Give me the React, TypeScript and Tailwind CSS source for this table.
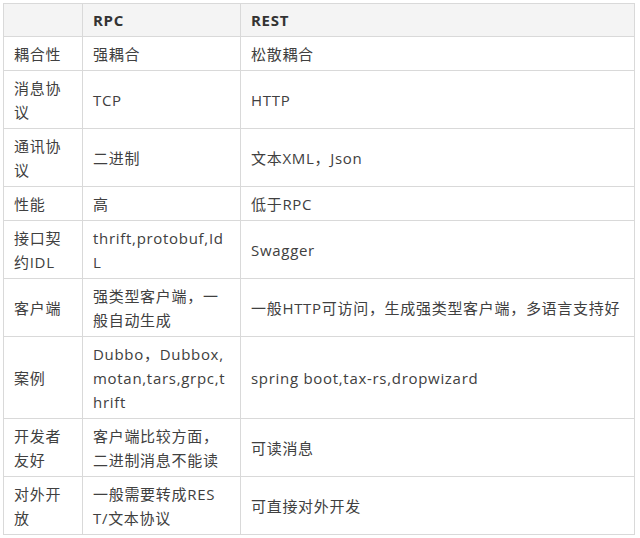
const rows: [string[], string[], string[]][] = [
  [["耦合性"], ["强耦合"], ["松散耦合"]],
  [["消息协", "议"], ["TCP"], ["HTTP"]],
  [["通讯协", "议"], ["二进制"], ["文本XML，Json"]],
  [["性能"], ["高"], ["低于RPC"]],
  [["接口契", "约IDL"], ["thrift,protobuf,Id", "L"], ["Swagger"]],
  [["客户端"], ["强类型客户端，一", "般自动生成"], ["一般HTTP可访问，生成强类型客户端，多语言支持好"]],
  [["案例"], ["Dubbo，Dubbox,", "motan,tars,grpc,t", "hrift"], ["spring boot,tax-rs,dropwizard"]],
  [["开发者", "友好"], ["客户端比较方面，", "二进制消息不能读"], ["可读消息"]],
  [["对外开", "放"], ["一般需要转成RES", "T/文本协议"], ["可直接对外开发"]],
];

function Lines({ lines }: { lines: string[] }) {
  return (
    <>
      {lines.map((l, i) => (
        <div key={i} className="whitespace-nowrap">
          {l}
        </div>
      ))}
    </>
  );
}

export default function App() {
  return (
    <div className="bg-white p-[3px] w-[640px] h-[538px] font-['Open_Sans','Noto_Sans_CJK_SC',sans-serif] text-[15px] leading-[24px] tracking-[0.7px] text-[#404040]">
      <table className="border-collapse w-[632px] table-fixed">
        <colgroup>
          <col className="w-[79px]" />
          <col className="w-[158px]" />
          <col />
        </colgroup>
        <thead>
          <tr className="bg-[#f4f4f4]">
            <th className="border border-[#d9d9d9] px-[10px] py-[4px]" />
            <th className="border border-[#d9d9d9] px-[10px] py-[4px] text-left font-bold text-[#333]">RPC</th>
            <th className="border border-[#d9d9d9] px-[10px] py-[4px] text-left font-bold text-[#333]">REST</th>
          </tr>
        </thead>
        <tbody>
          {rows.map((r, i) => (
            <tr key={i}>
              {r.map((cell, j) => (
                <td key={j} className="border border-[#d9d9d9] px-[10px] py-[4.5px] align-middle">
                  <Lines lines={cell} />
                </td>
              ))}
            </tr>
          ))}
        </tbody>
      </table>
    </div>
  );
}
